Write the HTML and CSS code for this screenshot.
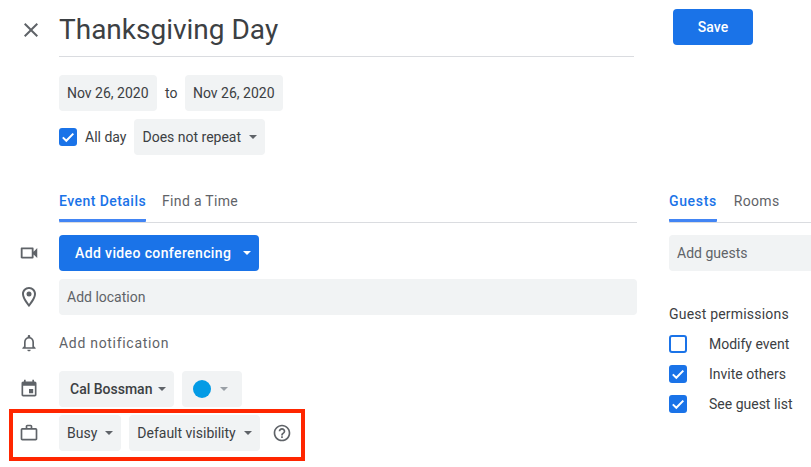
FILE: index.html
```html
<!DOCTYPE html>
<html lang="en">
<head>
  <meta charset="UTF-8">
  <title>Thanksgiving Day</title>
  <link rel="stylesheet" href="styles.css">
</head>
<body>
  <div class="page">
    <!-- Event editor -->
    <div class="main">
      <div class="title-row">
        <span class="gutter">
          <svg class="icon" viewBox="0 0 24 24"><path d="M19 6.41L17.59 5 12 10.59 6.41 5 5 6.41 10.59 12 5 17.59 6.41 19 12 13.41 17.59 19 19 17.59 13.41 12z"/></svg>
        </span>
        <h1 class="title">Thanksgiving Day</h1>
      </div>

      <div class="row date-row">
        <span class="btn">Nov 26, 2020</span>
        <span class="to">to</span>
        <span class="btn">Nov 26, 2020</span>
      </div>

      <div class="row repeat-row">
        <span class="check">
          <svg viewBox="0 0 18 18"><path d="M3.8 9.4l3.5 3.4 7-7.2"/></svg>
        </span>
        <span class="all-day">All day</span>
        <span class="btn">Does not repeat<i class="caret"></i></span>
      </div>

      <div class="tabs main-tabs">
        <span class="tab active">Event Details</span>
        <span class="tab">Find a Time</span>
      </div>

      <div class="fields">
        <div class="row">
          <span class="gutter">
            <svg class="icon icon-video" viewBox="0 0 24 24"><path d="M15 8v8H5V8h10m1-2H4c-.55 0-1 .45-1 1v10c0 .55.45 1 1 1h12c.55 0 1-.45 1-1v-3.5l4 4v-11l-4 4V7c0-.55-.45-1-1-1z"/></svg>
          </span>
          <span class="btn btn-primary btn-video">Add video conferencing<i class="caret"></i></span>
        </div>

        <div class="row">
          <span class="gutter">
            <svg class="icon" viewBox="0 0 24 24"><path d="M12 2C8.13 2 5 5.13 5 9c0 5.25 7 13 7 13s7-7.75 7-13c0-3.87-3.13-7-7-7zM7 9c0-2.76 2.24-5 5-5s5 2.24 5 5c0 2.88-2.88 7.19-5 9.88C9.92 16.21 7 11.85 7 9z"/><circle cx="12" cy="9" r="2.5"/></svg>
          </span>
          <span class="input">Add location</span>
        </div>

        <div class="row notify-row">
          <span class="gutter">
            <svg class="icon icon-sm" viewBox="0 0 24 24"><path d="M12 22c1.1 0 2-.9 2-2h-4c0 1.1.9 2 2 2zm6-6v-5c0-3.07-1.63-5.64-4.5-6.32V4c0-.83-.67-1.5-1.5-1.5s-1.5.67-1.5 1.5v.68C7.64 5.36 6 7.92 6 11v5l-2 2v1h16v-1l-2-2zm-2 1H8v-6c0-2.48 1.51-4.5 4-4.5s4 2.02 4 4.5v6z"/></svg>
          </span>
          <span class="notify">Add notification</span>
        </div>

        <div class="row">
          <span class="gutter">
            <svg class="icon icon-sm" viewBox="0 0 24 24"><path d="M17 12h-5v5h5v-5zM16 1v2H8V1H6v2H5c-1.11 0-1.99.9-1.99 2L3 19c0 1.1.89 2 2 2h14c1.1 0 2-.9 2-2V5c0-1.1-.9-2-2-2h-1V1h-2zm3 18H5V8h14v11z"/></svg>
          </span>
          <span class="btn btn-calendar">Cal Bossman<i class="caret"></i></span>
          <span class="btn btn-color"><i class="dot"></i><i class="caret caret-light"></i></span>
        </div>

        <div class="row">
          <span class="gutter">
            <svg class="icon icon-sm" viewBox="0 0 24 24"><path d="M14 6V4h-4v2h4zM4 8v11h16V8H4zm16-2c1.11 0 2 .89 2 2v11c0 1.11-.89 2-2 2H4c-1.11 0-2-.89-2-2l.01-11c0-1.11.88-2 1.99-2h4V4c0-1.11.89-2 2-2h4c1.11 0 2 .89 2 2v2h4z"/></svg>
          </span>
          <span class="btn">Busy<i class="caret"></i></span>
          <span class="btn">Default visibility<i class="caret"></i></span>
          <svg class="icon help" viewBox="0 0 24 24"><path d="M11 18h2v-2h-2v2zm1-16C6.48 2 2 6.48 2 12s4.48 10 10 10 10-4.48 10-10S17.52 2 12 2zm0 18c-4.41 0-8-3.59-8-8s3.59-8 8-8 8 3.59 8 8-3.59 8-8 8zm0-14c-2.21 0-4 1.79-4 4h2c0-1.1.9-2 2-2s2 .9 2 2c0 2-3 1.75-3 5h2c0-2.25 3-2.5 3-5 0-2.21-1.79-4-4-4z"/></svg>
        </div>
      </div>
    </div>

    <!-- Guests -->
    <div class="side">
      <span class="btn btn-primary btn-save">Save</span>

      <div class="tabs side-tabs">
        <span class="tab active">Guests</span>
        <span class="tab">Rooms</span>
      </div>

      <span class="input guests-input">Add guests</span>

      <div class="perm-title">Guest permissions</div>
      <div class="perm">
        <span class="check check-empty"></span>
        <span>Modify event</span>
      </div>
      <div class="perm">
        <span class="check"><svg viewBox="0 0 18 18"><path d="M3.8 9.4l3.5 3.4 7-7.2"/></svg></span>
        <span>Invite others</span>
      </div>
      <div class="perm">
        <span class="check"><svg viewBox="0 0 18 18"><path d="M3.8 9.4l3.5 3.4 7-7.2"/></svg></span>
        <span>See guest list</span>
      </div>
    </div>
  </div>

  <!-- Red annotation -->
  <div class="highlight"></div>
</body>
</html>
```

FILE: styles.css
```css
:root {
  --blue: #1a73e8;
  --text: #3c4043;
  --muted: #5f6368;
  --fill: #f1f3f4;
  --line: #dadce0;
}

*,
*::before,
*::after {
  box-sizing: border-box;
}

html,
body {
  margin: 0;
  height: 100%;
  overflow: hidden;
}

body {
  position: relative;
  background: #fff;
  color: var(--text);
  font-family: Roboto, "Liberation Sans", sans-serif;
  font-size: 14px;
}

.page {
  display: flex;
  gap: 32px;
}

.main {
  width: 637px;
  flex: none;
}

.side {
  flex: 1;
  min-width: 0;
  display: flex;
  flex-direction: column;
  align-items: flex-start;
}

.row {
  display: flex;
  align-items: center;
  gap: 8px;
}

.gutter {
  width: 58px;
  margin-right: -7px;
  flex: none;
  display: flex;
  justify-content: center;
}

.icon {
  width: 24px;
  height: 24px;
  fill: var(--muted);
  display: block;
}

.icon-sm {
  width: 20px;
  height: 20px;
}

.icon-video {
  width: 22px;
  height: 22px;
}

/* Title */
.title-row {
  display: flex;
  align-items: center;
  height: 57px;
  margin-right: 3px;
}

.title-row .gutter {
  width: 59px;
  margin-right: 0;
  padding-left: 3px;
  margin-top: 2px;
}

.title {
  flex: 1;
  margin: 0;
  height: 57px;
  line-height: 60px;
  font-size: 28px;
  font-weight: 400;
  color: var(--text);
  border-bottom: 1px solid var(--line);
}

/* Buttons */
.btn {
  display: inline-flex;
  align-items: center;
  height: 36px;
  padding: 0 8px;
  background: var(--fill);
  border-radius: 4px;
  white-space: nowrap;
}

.btn-primary {
  background: var(--blue);
  color: #fff;
  font-weight: 500;
  padding: 0 8px 0 16px;
}

.btn-video {
  letter-spacing: 0.38px;
}

.btn-save {
  width: 80px;
  margin: 9px 0 0 4px;
  padding: 0;
  justify-content: center;
}

.btn-calendar {
  padding-left: 11px;
  font-weight: 500;
}

.btn-calendar .caret {
  margin-left: 6px;
}

.btn-color {
  width: 60px;
  padding-left: 11px;
}

.caret {
  width: 0;
  height: 0;
  margin-left: 8px;
  border-left: 4px solid transparent;
  border-right: 4px solid transparent;
  border-top: 4px solid var(--muted);
}

.btn-primary .caret {
  border-top-color: #fff;
  margin-left: 12px;
}

.caret-light {
  margin-left: 9px;
  border-top-color: #9aa0a6;
}

.dot {
  width: 18px;
  height: 18px;
  border-radius: 50%;
  background: #039be5;
}

/* Dates */
.date-row {
  margin: 18px 0 0 59px;
}

.date-row .btn {
  width: 98px;
}

.to {
  width: 12px;
  text-align: center;
}

.repeat-row {
  margin: 8px 0 0 59px;
}

.check {
  width: 18px;
  height: 18px;
  flex: none;
  background: var(--blue);
  border-radius: 3px;
  display: block;
}

.check svg {
  display: block;
  fill: none;
  stroke: #fff;
  stroke-width: 2;
}

.check-empty {
  background: #fff;
  border: 2px solid var(--blue);
}

/* Tabs */
.tabs {
  display: flex;
  gap: 16px;
  height: 40px;
  border-bottom: 1px solid var(--line);
}

.main-tabs {
  margin: 28px 0 0 59px;
}

.side-tabs {
  margin-top: 138px;
  width: 100%;
  gap: 17px;
}

.tab {
  height: 39px;
  padding-top: 10px;
  line-height: 16px;
  color: var(--muted);
  letter-spacing: 0.32px;
}

.tab.active {
  color: var(--blue);
  font-weight: 500;
  letter-spacing: 0.45px;
  border-bottom: 3px solid #4285f4;
  border-radius: 0 0 1px 1px;
}

.side-tabs .tab.active {
  letter-spacing: 0.65px;
}

/* Fields */
.fields {
  margin-top: 12px;
  display: flex;
  flex-direction: column;
  gap: 8px;
}

.input {
  flex: 1;
  height: 36px;
  line-height: 36px;
  padding: 0 8px;
  background: var(--fill);
  border-radius: 4px;
  color: var(--muted);
}

.notify-row {
  height: 40px;
}

.notify {
  color: var(--muted);
  letter-spacing: 0.7px;
}

.help {
  width: 20px;
  height: 20px;
  margin-left: 4px;
}

/* Guest panel */
.guests-input {
  flex: none;
  width: 160px;
  margin-top: 12px;
}

.perm-title {
  margin-top: 34px;
  line-height: 18px;
  letter-spacing: 0.2px;
}

.perm {
  display: flex;
  align-items: center;
  gap: 22px;
  height: 18px;
  margin-top: 12px;
}

/* Annotation box over the last row */
.highlight {
  position: absolute;
  left: 9px;
  top: 409px;
  width: 296px;
  height: 52px;
  border: 4px solid #ff2600;
}
```
